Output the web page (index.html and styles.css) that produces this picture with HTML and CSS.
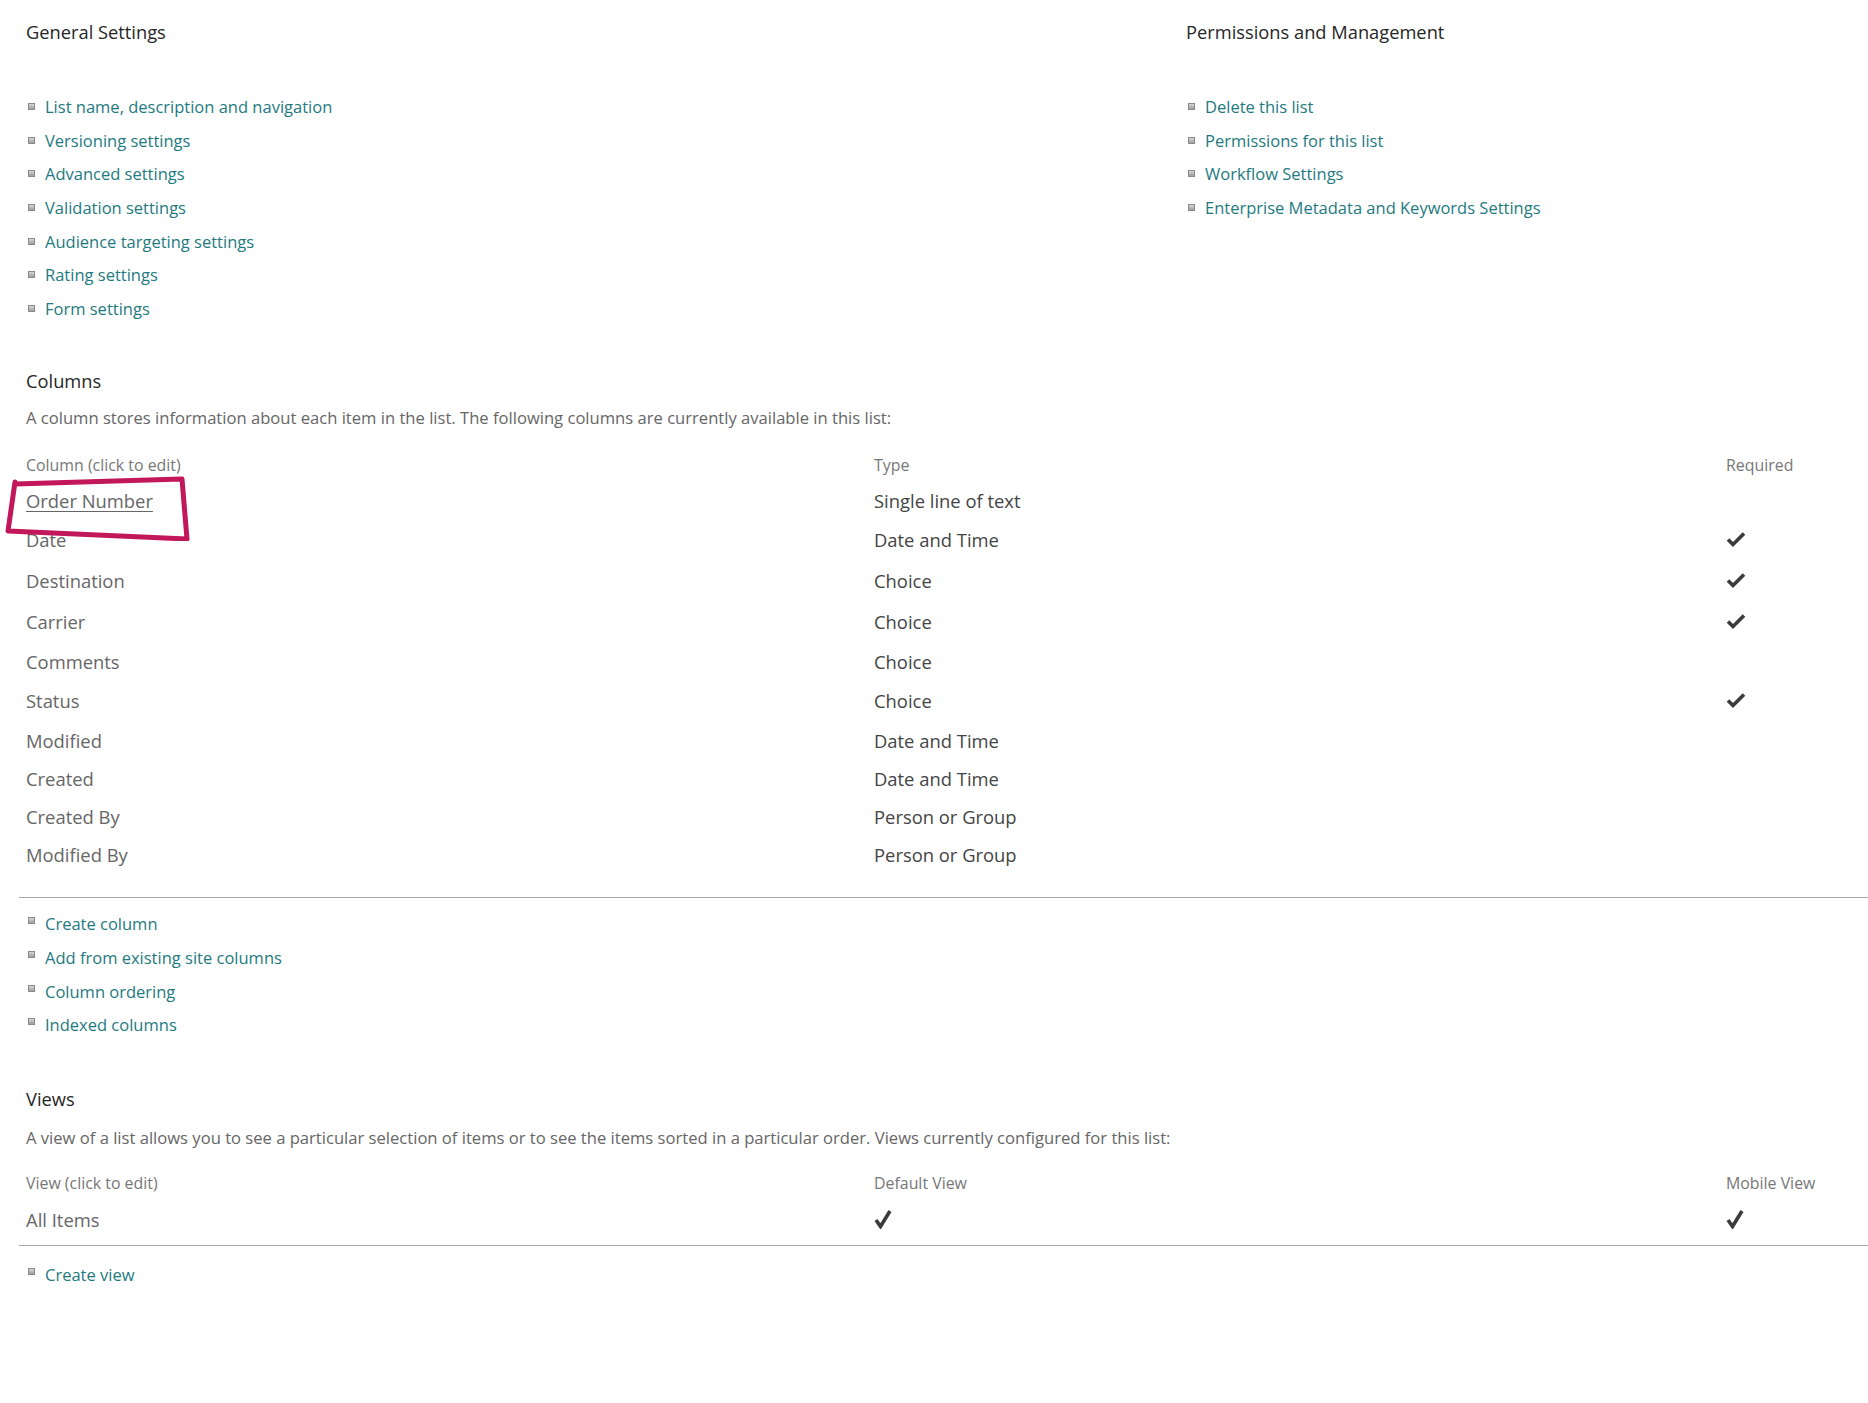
FILE: index.html
```html
<!DOCTYPE html>
<html lang="en">

<head>
  <meta charset="UTF-8">
  <meta name="viewport" content="width=device-width, initial-scale=1.0">
  <title>List Settings</title>
  <link rel="stylesheet" href="styles.css">
</head>

<body>
  <div class="page">
    <div class="top">
      <div class="top-col">
        <h2 class="section-title">General Settings</h2>
        <ul class="links">
          <li><a href="#">List name, description and navigation</a></li>
          <li><a href="#">Versioning settings</a></li>
          <li><a href="#">Advanced settings</a></li>
          <li><a href="#">Validation settings</a></li>
          <li><a href="#">Audience targeting settings</a></li>
          <li><a href="#">Rating settings</a></li>
          <li><a href="#">Form settings</a></li>
        </ul>
      </div>
      <div class="top-col">
        <h2 class="section-title">Permissions and Management</h2>
        <ul class="links">
          <li><a href="#">Delete this list</a></li>
          <li><a href="#">Permissions for this list</a></li>
          <li><a href="#">Workflow Settings</a></li>
          <li><a href="#">Enterprise Metadata and Keywords Settings</a></li>
        </ul>
      </div>
    </div>

    <!-- Columns -->
    <h2 class="section-title columns-title">Columns</h2>
    <p class="desc">A column stores information about each item in the list. The following columns are currently available in this list:</p>

    <div class="table">
      <div class="row head">
        <span>Column (click to edit)</span>
        <span>Type</span>
        <span>Required</span>
      </div>
      <div class="row">
        <a href="#" class="name edit">Order Number</a>
        <span class="type">Single line of text</span>
        <span></span>
      </div>
      <div class="row checked">
        <span class="name">Date</span>
        <span class="type">Date and Time</span>
        <span><svg class="check" viewBox="0 0 20 17"><path d="M2 8.5 L7 13.5 L18 2.5" /></svg></span>
      </div>
      <div class="row checked">
        <span class="name">Destination</span>
        <span class="type">Choice</span>
        <span><svg class="check" viewBox="0 0 20 17"><path d="M2 8.5 L7 13.5 L18 2.5" /></svg></span>
      </div>
      <div class="row checked">
        <span class="name">Carrier</span>
        <span class="type">Choice</span>
        <span><svg class="check" viewBox="0 0 20 17"><path d="M2 8.5 L7 13.5 L18 2.5" /></svg></span>
      </div>
      <div class="row">
        <span class="name">Comments</span>
        <span class="type">Choice</span>
        <span></span>
      </div>
      <div class="row checked">
        <span class="name">Status</span>
        <span class="type">Choice</span>
        <span><svg class="check" viewBox="0 0 20 17"><path d="M2 8.5 L7 13.5 L18 2.5" /></svg></span>
      </div>
      <div class="row">
        <span class="name">Modified</span>
        <span class="type">Date and Time</span>
        <span></span>
      </div>
      <div class="row">
        <span class="name">Created</span>
        <span class="type">Date and Time</span>
        <span></span>
      </div>
      <div class="row">
        <span class="name">Created By</span>
        <span class="type">Person or Group</span>
        <span></span>
      </div>
      <div class="row">
        <span class="name">Modified By</span>
        <span class="type">Person or Group</span>
        <span></span>
      </div>

      <svg class="mark" viewBox="0 0 200 70">
        <path d="M15 13 L182 8 L187 68 L8 60 L15 11" />
      </svg>
    </div>

    <hr class="divider columns-divider">

    <ul class="links low">
      <li><a href="#">Create column</a></li>
      <li><a href="#">Add from existing site columns</a></li>
      <li><a href="#">Column ordering</a></li>
      <li><a href="#">Indexed columns</a></li>
    </ul>

    <!-- Views -->
    <h2 class="section-title views-title">Views</h2>
    <p class="desc views-desc">A view of a list allows you to see a particular selection of items or to see the items sorted in a particular order. Views currently configured for this list:</p>

    <div class="table views">
      <div class="row head">
        <span>View (click to edit)</span>
        <span>Default View</span>
        <span>Mobile View</span>
      </div>
      <div class="row checked">
        <span class="name">All Items</span>
        <span><svg class="check tall" viewBox="0 0 20 20"><path d="M2 11 L6.5 17.5 L16 2" /></svg></span>
        <span><svg class="check tall" viewBox="0 0 20 20"><path d="M2 11 L6.5 17.5 L16 2" /></svg></span>
      </div>
    </div>

    <hr class="divider views-divider">

    <ul class="links low">
      <li><a href="#">Create view</a></li>
    </ul>
  </div>
</body>

</html>
```

FILE: styles.css
```css
body {
  margin: 0;
  background: #fff;
  font-family: "Open Sans", Arial, sans-serif;
  color: #333;
}

.page {
  padding: 20px 0 80px 26px;
}

.top {
  display: grid;
  grid-template-columns: 1160px 1fr;
}

.section-title {
  margin: 0;
  font-size: 18.3px;
  font-weight: 400;
  line-height: 24px;
  color: #262626;
}

.links {
  list-style: none;
  margin: 46px 0 0 0;
  padding: 0;
}

.links li {
  display: flex;
  align-items: center;
  height: 33.6px;
}

.links li::before {
  content: '';
  width: 5px;
  height: 5px;
  margin: 0 10px 0 2px;
  border: 1px solid #8a8a8a;
  background: linear-gradient(#d8d8d8, #9c9c9c);
  flex-shrink: 0;
}

.links.low li::before {
  margin-top: -6px;
}

.links a {
  font-size: 16.5px;
  color: #1e7a80;
  text-decoration: none;
}

.links a:hover {
  text-decoration: underline;
}

.columns-title {
  margin-top: 44px;
}

.desc {
  margin: 13px 0 0 0;
  font-size: 16.6px;
  line-height: 24px;
  color: #666;
}

.table {
  position: relative;
  margin-top: 19px;
}

.row {
  display: grid;
  grid-template-columns: 848px 852px 1fr;
  align-items: center;
  height: 38px;
  font-size: 18.4px;
}

.row.checked {
  height: 41px;
}

.row.head {
  height: 32px;
  font-size: 15.9px;
  color: #777;
}

.name {
  color: #666;
}

.name.edit {
  color: #666;
  text-decoration: underline;
  text-underline-offset: 3px;
}

.type {
  color: #444;
}

.check {
  display: block;
  width: 20px;
  height: 17px;
  fill: none;
  stroke: #3b3b3b;
  stroke-width: 3.6;
}

.check.tall {
  width: 20px;
  height: 20px;
}

.mark {
  position: absolute;
  left: -26px;
  top: 22px;
  width: 200px;
  height: 70px;
  fill: none;
  stroke: #c2185b;
  stroke-width: 5;
  stroke-linejoin: round;
  stroke-linecap: round;
}

.divider {
  margin: 0 0 0 -7px;
  border: none;
  border-top: 1px solid #a6a6a6;
}

.columns-divider {
  margin-top: 24px;
}

.links.low {
  margin-top: 9px;
}

.views-title {
  margin-top: 45px;
}

.views-desc {
  margin-top: 15px;
}

.desc + .views {
  margin-top: 17px;
}

.views-divider {
  margin-top: 5px;
}

.links.low:last-child {
  margin-top: 12px;
}
```
